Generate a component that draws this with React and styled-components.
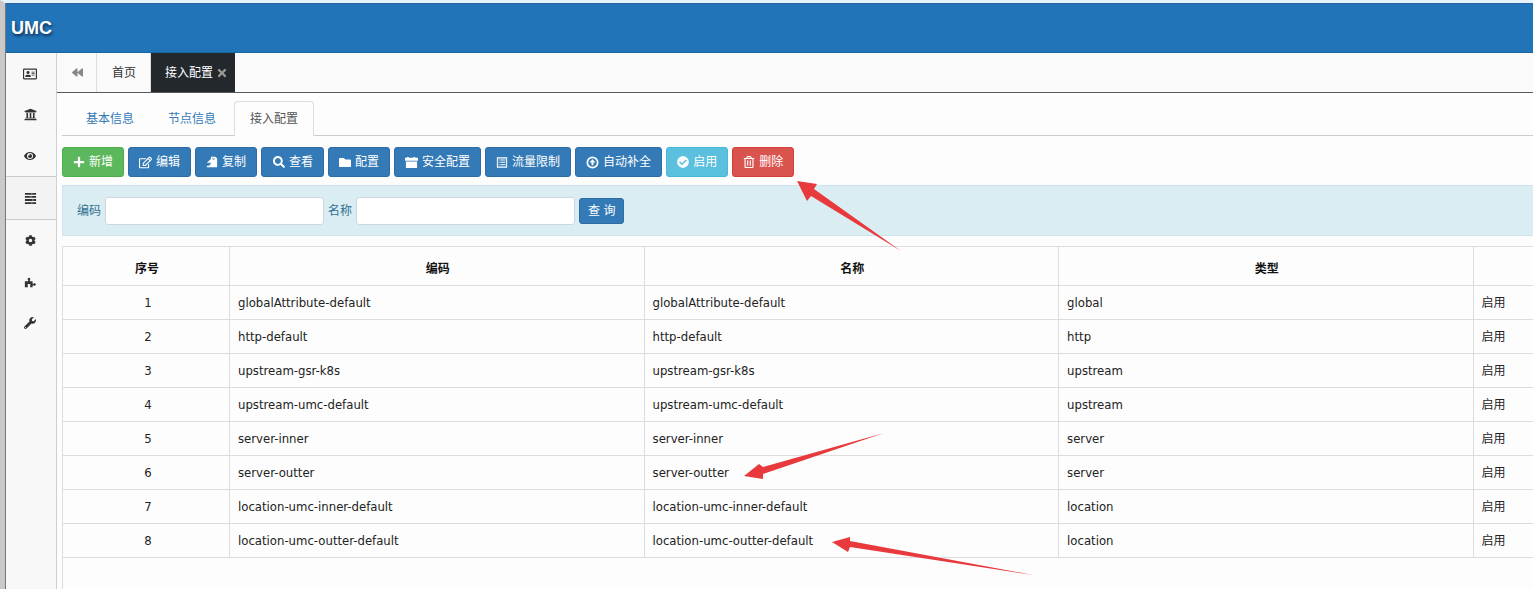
import React from "react";
import styled, { createGlobalStyle, css } from "styled-components";
import {
  FaRegAddressCard, FaUniversity, FaEye, FaCog, FaWrench, FaPlus, FaRegEdit, FaSearch,
  FaFolder, FaCheckCircle, FaRegTrashAlt, FaTimes, FaBackward,
} from "react-icons/fa";

const Global = createGlobalStyle`
  * { box-sizing: border-box; }
  body {
    margin: 0;
    background: #fdfdfd;
    color: #333;
    font: 12px/18px "DejaVu Sans Condensed", "Noto Sans CJK SC", sans-serif;
    overflow: hidden;
  }
  button, input { font: inherit; }
`;

const Page = styled.div`
  position: relative;
  min-height: 100vh;
  display: flex;
  flex-direction: column;
  padding-left: 1px;
  background: #777;
  border-left: 5px solid #c9c9c9;
  border-top: 3px solid #e6f3fb;
`;

const Header = styled.header`
  height: 50px;
  padding: 0 5px;
  display: flex;
  align-items: center;
  background: #2174b8;
  border-top: 1px solid #2a64a6;
  border-bottom: 1px solid #17669f;
`;

const Brand = styled.a`
  color: #fff;
  font: bold 18px/24px "Liberation Sans", sans-serif;
  text-decoration: none;
  text-shadow: 1px 2px 3px #0c2c50;
`;

const Body = styled.div`
  flex: 1;
  display: flex;
  background: #fdfdfd;
`;

const Sidebar = styled.nav`
  flex: 0 0 51px;
  display: flex;
  flex-direction: column;
  background: #f8f8f8;
  border-right: 1px solid #d0d0d0;
`;

const SideLink = styled.a`
  height: 41px;
  padding-right: 2px;
  display: flex;
  align-items: center;
  justify-content: center;
  color: #333;
  ${(p) => p.$active && css`
    height: 44px;
    background: #f3f3f3;
    border-top: 1px solid #ccc;
    border-bottom: 1px solid #ccc;
  `}
`;

const Main = styled.main`
  flex: 1;
  min-width: 0;
  display: flex;
  flex-direction: column;
`;

const PageTabs = styled.div`
  height: 40px;
  display: flex;
  background: #fafafa;
  border-bottom: 1px solid #555b60;
`;

const PageTab = styled.button`
  padding: 0 14px 0 15px;
  display: flex;
  align-items: center;
  gap: 3px;
  border: 0;
  border-right: 1px solid #ddd;
  background: #fafafa;
  color: #333;
  ${(p) => p.$active && css`
    background: #23282d;
    border-right: 0;
    color: #fff;
    padding: 0 7px 0 14px;
    svg { color: #999; }
  `}
  ${(p) => p.$icon && css`
    padding: 0 13px 0 15px;
    color: #888;
  `}
`;

const Content = styled.div`
  flex: 1;
  display: flex;
  flex-direction: column;
  padding: 8px 0 0 5px;
`;

const SubTabs = styled.div`
  display: flex;
  height: 35px;
  padding-left: 8px;
  border-bottom: 1px solid #ccc;
`;

const SubTab = styled.button`
  height: 35px;
  padding: 0 15px;
  margin-right: 2px;
  border: 1px solid transparent;
  border-bottom: 0;
  border-radius: 4px 4px 0 0;
  background: transparent;
  color: #337ab7;
  ${(p) => p.$active && css`
    background: #fdfdfd;
    border-color: #ddd;
    color: #555;
  `}
`;

const Toolbar = styled.div`
  display: flex;
  gap: 4px;
  padding: 11px 0 8px;
`;

const tones = {
  green: ["#5cb85c", "#4cae4c"],
  blue: ["#337ab7", "#2e6da4"],
  cyan: ["#5bc0de", "#46b8da"],
  red: ["#d9534f", "#d43f3a"],
};

const Button = styled.button`
  height: ${(p) => (p.$small ? 26 : 30)}px;
  padding: 0 ${(p) => (p.$small ? 8 : 10)}px;
  display: flex;
  align-items: center;
  gap: 4px;
  white-space: nowrap;
  color: #fff;
  background: ${(p) => tones[p.$tone][0]};
  border: 1px solid ${(p) => tones[p.$tone][1]};
  border-radius: 3px;
`;

const IconSlot = styled.span`
  width: ${(p) => p.$width}px;
  display: flex;
  justify-content: center;
`;

const SearchForm = styled.form`
  height: 51px;
  padding: 0 14px;
  display: flex;
  align-items: center;
  gap: 4px;
  background: #d9edf2;
  border: 1px solid #cfe3ee;
  border-right: 0;
  color: #31708f;
`;

const Field = styled.label`
  display: flex;
  align-items: center;
  gap: 4px;
`;

const TextInput = styled.input`
  width: 219px;
  height: 28px;
  padding: 0 8px;
  background: #fff;
  border: 1px solid #ccd8de;
  border-radius: 3px;
`;

const TableBox = styled.div`
  flex: 1;
  margin-top: 10px;
  border-left: 1px solid #ddd;
  border-top: 1px solid #ddd;
`;

const Table = styled.table`
  width: 100%;
  table-layout: fixed;
  border-collapse: separate;
  border-spacing: 0;
  color: #222;
  th:last-child, td:last-child { border-right: 0; }
`;

const Col = styled.col`
  width: ${(p) => p.$width};
`;

const Th = styled.th`
  height: 39px;
  padding: 5px 6px 0 8px;
  border-right: 1px solid #ddd;
  border-bottom: 1px solid #ddd;
  font-weight: bold;
  color: #111;
`;

const Td = styled.td`
  height: 34px;
  padding: ${(p) => (p.$center ? "0 4px 0 8px" : "0 8px")};
  border-right: 1px solid #ddd;
  border-bottom: 1px solid #ddd;
  text-align: ${(p) => (p.$center ? "center" : "left")};
  font-size: 13px;
  white-space: nowrap;
`;

const State = styled.span`
  font-size: 12px;
`;

const Arrows = styled.svg`
  position: absolute;
  left: 735px;
  top: 167px;
  pointer-events: none;
`;

const Glyph = ({ size = 12, children }) => (
  <svg width={size} height={size} viewBox="0 0 14 14" fill="currentColor" aria-hidden="true">
    {children}
  </svg>
);

const RackIcon = () => (
  <Glyph size={13}>
    <path d="M1 1h12v2H1zM1 4.300h12v2H1zM1 7.600h12v2H1zM1 11h12v2H1z" />
    <path d="M8 1.500h1v1H8zM7 4.800h1v1H7zM9 8.100h1v1H9zM8 11.500h1v1H8z" fill="#f3f3f3" />
  </Glyph>
);

const PuzzleIcon = () => (
  <Glyph>
    <path d="M1 6h3.500c.7 0 .5-.7.1-1.300C3.800 3.300 4.500 2 5.800 2s2 1.300 1.200 2.700C6.600 5.300 6.600 6 7.300 6H10v2.500c0 .8.7.8 1.300.4 1.200-.8 2.400-.1 2.400 1.100s-1.200 1.900-2.400 1.100c-.6-.4-1.300-.4-1.300.4V13H7.200v-1.200c0-.5.3-.6.3-1.200 0-.7-.7-1.200-1.700-1.200s-1.700.5-1.700 1.200c0 .6.4.7.4 1.200V13H1z" />
  </Glyph>
);

const CopyIcon = () => (
  <Glyph>
    <path d="M6 1h5l2 2v10H8l-1-5-2-2zM1 8l4-4 3 3v6H1v-1.500h3V8z" />
    <path d="M7 3h3v1H8zM4 7l2 2-2 2z" fill="#337ab7" />
  </Glyph>
);

const CalendarIcon = () => (
  <Glyph size={13}>
    <path d="M0 2h2V1h2v1h5V1h2v1h3v3H0zM1 6h12v7H1z" />
  </Glyph>
);

const ListIcon = () => (
  <Glyph size={13}>
    <path fillRule="evenodd" d="M1 1h12v12H1zM2.200 2.200v9.600h9.600V2.200z" />
    <path d="M3 3.500h1.200v1.200H3zM5 3.500h6v1.200H5zM3 6.200h1.200v1.200H3zM5 6.200h6v1.200H5zM3 9h1.200v1.200H3zM5 9h6v1.200H5z" />
  </Glyph>
);

const CircleUpIcon = () => (
  <Glyph size={13}>
    <path fillRule="evenodd" d="M7 .5a6.500 6.500 0 1 0 0 13 6.500 6.500 0 0 0 0-13zM7 2.300a4.700 4.700 0 1 1 0 9.400 4.700 4.700 0 0 1 0-9.400z" />
    <path d="M7 3.500 10.300 7H8v3H6V7H3.700z" />
  </Glyph>
);

const sideItems = [
  ["身份", <FaRegAddressCard size={14} />],
  ["机构", <FaUniversity size={13} />],
  ["监控", <FaEye size={12} />],
  ["服务", <RackIcon />],
  ["设置", <FaCog size={11} />],
  ["插件", <PuzzleIcon />],
  ["工具", <FaWrench size={12} />],
];

const actions = [
  ["新增", "green", 12, <FaPlus size={12} />],
  ["编辑", "blue", 13, <FaRegEdit size={13} />],
  ["复制", "blue", 12, <CopyIcon />],
  ["查看", "blue", 13, <FaSearch size={12} />],
  ["配置", "blue", 12, <FaFolder size={13} />],
  ["安全配置", "blue", 13, <CalendarIcon />],
  ["流量限制", "blue", 12, <ListIcon />],
  ["自动补全", "blue", 13, <CircleUpIcon />],
  ["启用", "cyan", 12, <FaCheckCircle size={12} />],
  ["删除", "red", 12, <FaRegTrashAlt size={12} />],
];

const rows = [
  ["globalAttribute-default", "global"],
  ["http-default", "http"],
  ["upstream-gsr-k8s", "upstream"],
  ["upstream-umc-default", "upstream"],
  ["server-inner", "server"],
  ["server-outter", "server"],
  ["location-umc-inner-default", "location"],
  ["location-umc-outter-default", "location"],
];

export default function App() {
  return (
    <>
      <Global />
      <Page>
        <Header><Brand href="#">UMC</Brand></Header>
        <Body>
          <Sidebar>
            {sideItems.map(([label, icon], i) => (
              <SideLink key={label} href="#" aria-label={label} $active={i === 3}>{icon}</SideLink>
            ))}
          </Sidebar>
          <Main>
            <PageTabs>
              <PageTab $icon aria-label="后退"><FaBackward size={11} /></PageTab>
              <PageTab>首页</PageTab>
              <PageTab $active>接入配置<FaTimes size={12} /></PageTab>
            </PageTabs>
            <Content>
              <SubTabs>
                <SubTab>基本信息</SubTab>
                <SubTab>节点信息</SubTab>
                <SubTab $active>接入配置</SubTab>
              </SubTabs>
              <Toolbar>
                {actions.map(([label, tone, width, icon]) => (
                  <Button key={label} $tone={tone}><IconSlot $width={width}>{icon}</IconSlot>{label}</Button>
                ))}
              </Toolbar>
              <SearchForm onSubmit={(e) => e.preventDefault()}>
                <Field>编码<TextInput type="text" /></Field>
                <Field>名称<TextInput type="text" /></Field>
                <Button type="submit" $tone="blue" $small>查 询</Button>
              </SearchForm>
              <TableBox>
                <Table>
                  <colgroup>
                    <Col $width="167px" />
                    <Col $width="28.2%" />
                    <Col $width="28.2%" />
                    <Col $width="28.2%" />
                    <Col />
                  </colgroup>
                  <thead>
                    <tr><Th>序号</Th><Th>编码</Th><Th>名称</Th><Th>类型</Th><Th /></tr>
                  </thead>
                  <tbody>
                    {rows.map(([name, type], i) => (
                      <tr key={name}>
                        <Td $center>{i + 1}</Td>
                        <Td>{name}</Td>
                        <Td>{name}</Td>
                        <Td>{type}</Td>
                        <Td><State>启用</State></Td>
                      </tr>
                    ))}
                  </tbody>
                </Table>
              </TableBox>
            </Content>
          </Main>
        </Body>
        <Arrows width="300" height="410" viewBox="740 170 300 410" fill="#e8393c" aria-hidden="true">
          <path d="M797 181 817 184 814 189 901 251 811 196 807 201z" />
          <path d="M744 476 759 464 763 467 884 433 763 474 763 479z" />
          <path d="M832 542 850 537 850 541 1033 575 850 547 848 552z" />
        </Arrows>
      </Page>
    </>
  );
}
